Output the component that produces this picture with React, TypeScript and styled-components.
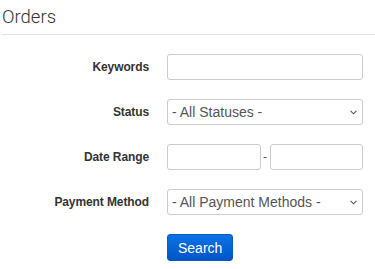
import React from 'react'
import styled, { createGlobalStyle } from 'styled-components'

const GlobalStyle = createGlobalStyle`
  body {
    margin: 0;
    background: #fff;
    font-family: "Liberation Sans", Arial, sans-serif;
  }
`

const Page = styled.div`
  padding: 0 0 0 2px;
`

const Title = styled.h1`
  margin: 0;
  padding: 6px 0 6px 0;
  font-family: Roboto, "Liberation Sans", sans-serif;
  font-weight: 300;
  font-size: 18.5px;
  line-height: 22px;
  color: #333;
  border-bottom: 1px solid #e3e3e3;
`

const Form = styled.form`
  display: grid;
  grid-template-columns: 147px 196px;
  column-gap: 18px;
  row-gap: 19px;
  align-items: center;
  margin-top: 19px;
`

const Label = styled.label`
  text-align: right;
  font-size: 12px;
  font-weight: bold;
  color: #333;
  letter-spacing: -0.1px;
`

const Input = styled.input`
  box-sizing: border-box;
  width: 100%;
  min-width: 0;
  height: 26px;
  border: 1px solid #ccc;
  border-radius: 3px;
  padding: 0 6px;
  font-family: inherit;
  font-size: 14px;
  color: #555;
  background: #fff;
`

const RangeInput = styled(Input)`
  flex: 1 1 0;
`

const SelectWrap = styled.div`
  position: relative;
  height: 26px;
`

const Select = styled.select`
  box-sizing: border-box;
  width: 100%;
  height: 26px;
  appearance: none;
  border: 1px solid #ccc;
  border-radius: 3px;
  padding: 0 20px 0 4px;
  font-family: inherit;
  font-size: 14px;
  color: #555;
  background: #fff;
`

const Chevron = styled.svg`
  position: absolute;
  right: 6px;
  top: 11px;
  pointer-events: none;
`

const Range = styled.div`
  display: flex;
  align-items: center;
`

const Dash = styled.span`
  flex: 0 0 9px;
  text-align: center;
  font-size: 12px;
  color: #555;
`

const Empty = styled.span``

const SearchButton = styled.button`
  justify-self: start;
  height: 27px;
  padding: 0 10px;
  border: 1px solid #0a5bc4;
  border-radius: 3px;
  background: linear-gradient(#0b72e6, #0055c6);
  color: #fff;
  font-family: inherit;
  font-size: 14px;
  cursor: pointer;
`

const ArrowIcon: React.FC = () => (
  <Chevron width="7" height="5" viewBox="0 0 7 5">
    <path d="M0.6 0.8 L3.5 3.8 L6.4 0.8" fill="none" stroke="#555" strokeWidth="1.1" />
  </Chevron>
)

const App: React.FC = () => {
  return (
    <Page>
      <GlobalStyle />
      <Title>Orders</Title>
      <Form onSubmit={(e) => e.preventDefault()}>
        <Label>Keywords</Label>
        <Input type="text" />

        <Label>Status</Label>
        <SelectWrap>
          <Select defaultValue="">
            <option value="">- All Statuses -</option>
          </Select>
          <ArrowIcon />
        </SelectWrap>

        <Label>Date Range</Label>
        <Range>
          <RangeInput type="text" />
          <Dash>-</Dash>
          <RangeInput type="text" />
        </Range>

        <Label>Payment Method</Label>
        <SelectWrap>
          <Select defaultValue="">
            <option value="">- All Payment Methods -</option>
          </Select>
          <ArrowIcon />
        </SelectWrap>

        <Empty />
        <SearchButton type="submit">Search</SearchButton>
      </Form>
    </Page>
  )
}

export default App
